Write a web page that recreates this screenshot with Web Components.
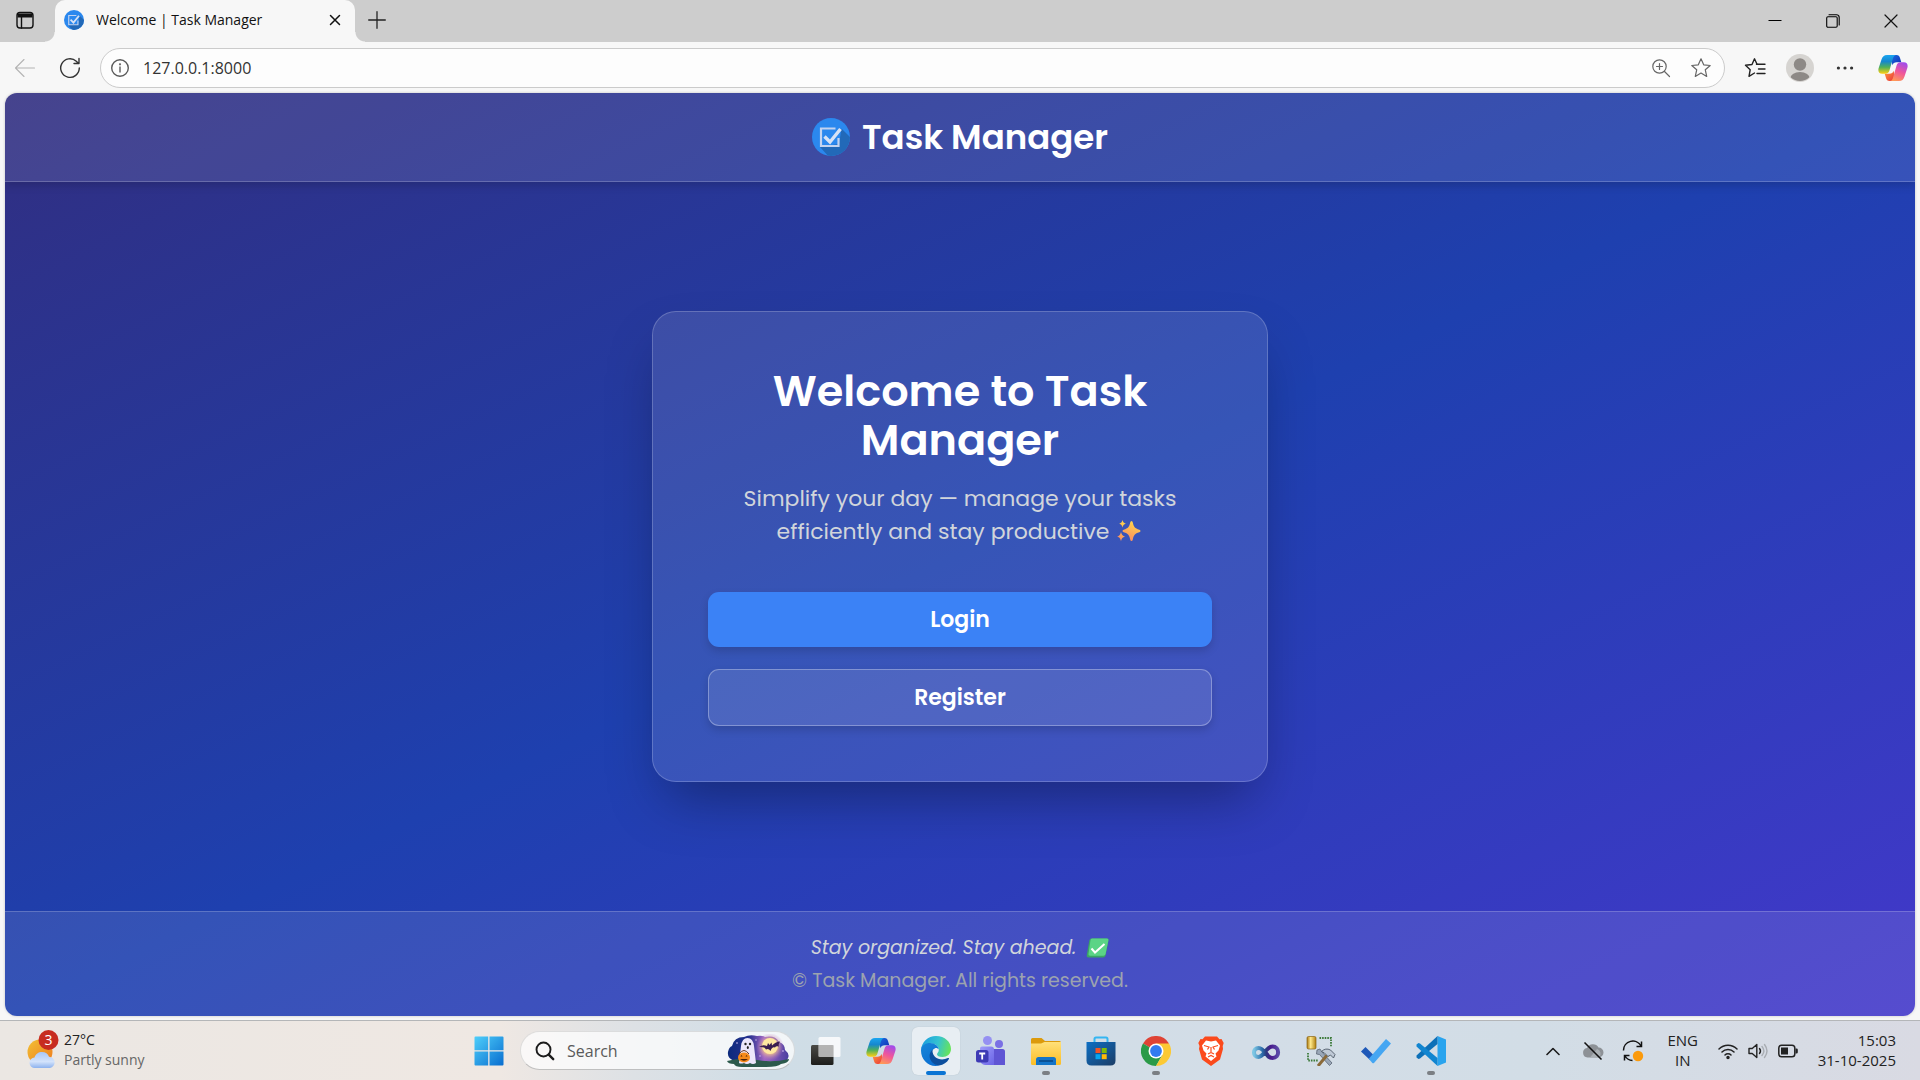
<!DOCTYPE html>
<html lang="en">
<head>
<meta charset="utf-8">
<title>Welcome | Task Manager</title>
<style>
  body { margin: 0; font-family: "Open Sans", "Noto Sans", sans-serif; color: #1b1b1b; }
</style>
</head>
<body>
<desktop-screen>
  <browser-window slot="window" address="127.0.0.1:8000" tab-title="Welcome | Task Manager">
    <task-page>
      <welcome-card>
        <span slot="title">Welcome to Task Manager</span>
        <span slot="text">Simplify your day — manage your tasks efficiently and stay productive</span>
        <action-button slot="actions" variant="primary">Login</action-button>
        <action-button slot="actions" variant="ghost">Register</action-button>
      </welcome-card>
    </task-page>
  </browser-window>
  <task-bar slot="taskbar"></task-bar>
</desktop-screen>

<script>
const RESET = `
  :host, *, *::before, *::after { box-sizing: border-box; }
  button { font: inherit; color: inherit; background: none; border: 0; padding: 0; margin: 0; cursor: pointer; display: flex; align-items: center; justify-content: center; }
  input { font: inherit; color: inherit; background: none; border: 0; padding: 0; margin: 0; outline: 0; min-width: 0; }
  svg { display: block; flex: none; }
`;

function define(name, render) {
  customElements.define(name, class extends HTMLElement {
    connectedCallback() {
      if (this.shadowRoot) return;
      const root = this.attachShadow({ mode: 'open' });
      const t = document.createElement('template');
      t.innerHTML = render(this).replace('<style>', '<style>' + RESET);
      root.append(t.content.cloneNode(true));
    }
  });
}

const line = (size, body, w = 1.4, color = '#333') =>
  `<svg width="${size}" height="${size}" viewBox="0 0 ${size} ${size}" fill="none" stroke="${color}" stroke-width="${w}" stroke-linecap="round" stroke-linejoin="round">${body}</svg>`;

const COPILOT = `
  <svg width="30" height="30" viewBox="0 0 30 30">
    <defs>
      <linearGradient id="ca" x1="0" y1="0" x2="0" y2="1"><stop offset="0" stop-color="#1aa5f0"/><stop offset=".35" stop-color="#1687cf"/><stop offset=".65" stop-color="#4fb05a"/><stop offset="1" stop-color="#ffcf12"/></linearGradient>
      <linearGradient id="cb" x1=".7" y1="0" x2=".3" y2="1"><stop offset="0" stop-color="#a24bea"/><stop offset=".5" stop-color="#f0569a"/><stop offset="1" stop-color="#ff9a56"/></linearGradient>
      <linearGradient id="cc" x1="0" y1="0" x2="1" y2="1"><stop offset="0" stop-color="#1b6be0"/><stop offset="1" stop-color="#0f2fb4"/></linearGradient>
      <linearGradient id="cd" x1="0" y1="0" x2="1" y2="1"><stop offset="0" stop-color="#ff9a3c"/><stop offset="1" stop-color="#e8323c"/></linearGradient>
    </defs>
    <path d="M13 2h5.500c2 0 3 1.300 3.500 3l1.300 4.300h-4.800c-2 0-3.500 1-4.200 3z" fill="url(#cc)"/>
    <path d="M17 28h-5.500c-2 0-3-1.300-3.500-3l-1.300-4.300h4.800c2 0 3.500-1 4.200-3z" fill="url(#cd)"/>
    <path d="M9 2h9c-1.700.3-2.500 1.700-3 3.300l-3.500 12c-.6 2.200-1.800 3.400-4 3.400H4.200c-3.300 0-4.400-2.600-3.600-5.500L3.500 6.500C4.500 3.500 6 2 9 2z" fill="url(#ca)"/>
    <path d="M21 28h-9c1.700-.3 2.500-1.700 3-3.300l3.500-12c.6-2.200 1.800-3.400 4-3.400h3.300c3.300 0 4.400 2.600 3.600 5.500l-2.900 8.700C25.500 26.500 24 28 21 28z" fill="url(#cb)"/>
  </svg>`;

define('desktop-screen', () => `
  <style>
    :host { display: flex; flex-direction: column; height: 100vh; min-height: 720px; }
    .window { flex: 1; display: flex; min-height: 0; }
  </style>
  <div class="window"><slot name="window"></slot></div>
  <slot name="taskbar"></slot>`);

/* App badge: blue disc with a ticked box and a long shadow */
define('task-logo', () => `
  <style>
    :host { display: block; width: 20px; height: 20px; flex: none; }
    svg { width: 100%; height: 100%; }
  </style>
  <svg viewBox="0 0 38 38" role="img" aria-label="Task Manager logo">
    <defs><clipPath id="disc"><circle cx="19" cy="19" r="19"/></clipPath></defs>
    <g clip-path="url(#disc)">
      <path d="M0 0h38v38H0z" fill="#2b88ee"/>
      <path d="M29.500 10.500 40 21v19H18L8 29l19-3z" fill="#2269b8"/>
    </g>
    <path d="M23.500 10.500H9v17.500h17.500v-8" fill="none" stroke="#c3d3f0" stroke-width="2.200"/>
    <path d="M12.500 18.500l5.500 5.500 10.500-13" fill="none" stroke="#d7e2f5" stroke-width="3.400"/>
  </svg>`);

define('browser-window', el => `
  <style>
    :host { flex: 1; display: flex; flex-direction: column; min-width: 0; background: #f7f7f7; }
    .strip { height: 42px; background: #cdcdcd; display: flex; align-items: stretch; font-size: 14px; }
    .strip > .cell { width: 50px; }
    .strip > .new { width: 44px; }
    .tab { position: relative; flex: 0 1 300px; margin-left: 5px; padding: 0 10px 0 9px; display: flex; align-items: center; gap: 12px; background: #f7f7f7; border-radius: 10px 10px 0 0; color: #111; }
    .tab::before, .tab::after { content: ""; position: absolute; bottom: 0; width: 10px; height: 10px; }
    .tab::before { left: -10px; background: radial-gradient(circle at 0 0, transparent 9px, #f7f7f7 10px); }
    .tab::after { right: -10px; background: radial-gradient(circle at 100% 0, transparent 9px, #f7f7f7 10px); }
    .tab span { flex: 1; white-space: nowrap; overflow: hidden; padding-bottom: 3px; }
    .tab task-logo, .tab button, .strip > .cell svg { margin-bottom: 2px; }
    .tab button { width: 20px; height: 20px; }
    .win { margin-left: auto; display: flex; }
    .win button { width: 58px; }
    .bar { height: 51px; display: flex; align-items: center; padding: 0 4px 0 5px; }
    .nav { display: flex; gap: 5px; margin-right: 10px; }
    .nav button { width: 40px; height: 40px; }
    .address { flex: 1; height: 40px; display: flex; align-items: center; border: 1px solid #cbcbcb; border-radius: 20px; background: #fdfdfd; padding: 0 3px 0 9px; margin-right: 7px; }
    .address input { flex: 1; font-size: 16px; padding-left: 13px; color: #333; }
    .address button { width: 40px; height: 36px; }
    .tools { display: flex; }
    .tools button { width: 45px; height: 40px; }
    .tools button:last-child { width: 49px; padding-left: 3px; }
    .view { flex: 1; display: flex; margin: 0 5px 4px; border-radius: 12px; overflow: hidden; min-height: 0; box-shadow: 0 0 3px #0003; }
  </style>
  <div class="strip">
    <button class="cell" aria-label="Tab actions">${line(18, '<rect x="1" y="1.500" width="16" height="15.500" rx="3"/><path d="M1.500 4.500h15" stroke-width="4" stroke-linecap="butt"/><path d="M5.500 6v11"/>', 1.4, '#111')}</button>
    <div class="tab"><task-logo></task-logo><span>${el.getAttribute('tab-title')}</span>
      <button aria-label="Close tab">${line(12, '<path d="M1.500 1.500l9 9M10.500 1.500l-9 9"/>', 1.5, '#111')}</button></div>
    <button class="cell new" aria-label="New tab">${line(18, '<path d="M9 .7v16.600M.7 9h16.600"/>', 1.3, '#222')}</button>
    <div class="win">
      <button aria-label="Minimize">${line(14, '<path d="M.5 6.500h13" stroke-linecap="butt"/>', 1, '#000')}</button>
      <button aria-label="Restore">${line(14, '<rect x=".7" y="2.700" width="10.500" height="10.500" rx="1.200"/><path d="M3 .7h7.500a2.700 2.700 0 0 1 2.700 2.700V11"/>', 1.1, '#000')}</button>
      <button aria-label="Close">${line(14, '<path d="M1 1l12 12M13 1L1 13"/>', 1.2, '#111')}</button>
    </div>
  </div>
  <div class="bar">
    <div class="nav">
      <button aria-label="Back">${line(22, '<path d="M20.500 11H1.500M10 2.500L1.500 11l8.500 8.500"/>', 1.1, '#b4b4b4')}</button>
      <button aria-label="Reload">${line(22, '<path d="M20.300 11a9.300 9.300 0 1 1-3-6.800l2 2M20 1.500v5h-5"/>', 1.4, '#333')}</button>
    </div>
    <div class="address">
      ${line(20, '<circle cx="10" cy="10" r="8.300"/><path d="M10 9v5"/><circle cx="10" cy="6.300" r=".4"/>', 1.4, '#5a5a5a')}
      <input type="text" aria-label="Address" value="${el.getAttribute('address')}">
      <button aria-label="Zoom">${line(20, '<circle cx="8.500" cy="8.500" r="6.700"/><path d="M13.500 13.500l5 5M8.500 5.500v6M5.500 8.500h6"/>', 1.2, '#666')}</button>
      <button aria-label="Add to favorites">${line(22, '<path d="M11 1.800l2.700 6 6.500.7-4.900 4.300 1.400 6.600L11 16l-5.700 3.400 1.400-6.600L1.800 8.500l6.500-.7z"/>', 1.2, '#666')}</button>
    </div>
    <div class="tools">
      <button aria-label="Favorites">${line(22, '<path d="M12.500 7.200H21M14.500 12H21M13 16.500h8"/><path d="M13 7.200L10.500 1.800 8 7.500l-6.500.8L6.200 12.700 5 19.300 10.500 16"/>', 1.4, '#222')}</button>
      <button aria-label="Profile"><svg width="28" height="28" viewBox="0 0 28 28"><defs><clipPath id="p"><circle cx="14" cy="14" r="13"/></clipPath></defs><circle cx="14" cy="14" r="14" fill="#d6d4d1"/><g fill="#8d8986" clip-path="url(#p)"><circle cx="14" cy="10.500" r="6.200"/><ellipse cx="14" cy="25" rx="10" ry="7"/></g></svg></button>
      <button aria-label="Settings and more"><svg width="18" height="6" viewBox="0 0 18 6" fill="#333"><circle cx="2.400" cy="3" r="1.600"/><circle cx="9" cy="3" r="1.600"/><circle cx="15.600" cy="3" r="1.600"/></svg></button>
      <button aria-label="Copilot">${COPILOT}</button>
    </div>
  </div>
  <div class="view"><slot></slot></div>`);

define('task-page', () => `
  <style>
    :host { flex: 1; display: flex; flex-direction: column; color: #fff; font-family: Poppins, Inter, sans-serif; background: linear-gradient(to bottom right, #312e81, #1e40af, #4338ca); }
    header { display: flex; align-items: center; justify-content: center; gap: 12px; padding: 18px; background: #ffffff1a; border-bottom: 1px solid #ffffff33; box-shadow: 0 4px 8px #00000026; font-size: 34px; font-weight: 600; line-height: 52px; }
    header task-logo { width: 38px; height: 38px; }
    header h1 { margin: 0; font: inherit; }
    main { flex: 1; display: flex; align-items: center; justify-content: center; padding: 20px; }
    footer { padding: 19px 16px; background: #ffffff1a; border-top: 1px solid #ffffff33; text-align: center; font-size: 19px; line-height: 33px; color: #9ca3af; }
    footer p { margin: 0; display: flex; justify-content: center; align-items: center; gap: 10px; }
    .motto { font-style: italic; color: #d1d5db; }
  </style>
  <header><task-logo></task-logo><h1>Task Manager</h1></header>
  <main><slot></slot></main>
  <footer>
    <p class="motto">Stay organized. Stay ahead.
      <svg width="23" height="20" viewBox="0 0 23 20" role="img" aria-label="check mark"><path d="M5.500.5H21q2 0 1.500 2l-3 15q-.4 2-2.500 2H2.500q-2.200 0-1.800-2l2.600-15Q3.600.5 5.500.5z" fill="#3aa565"/><path d="M6 .5h15q1.800 0 1.400 1.800L19.600 16q-.4 1.800-2.200 1.800H4q-1.900 0-1.500-1.800L4.500 2Q4.800.5 6 .5z" fill="#5bd486"/><path d="M5.500 10.500l3.500 4 9.500-8.500" fill="none" stroke="#fff" stroke-width="2"/></svg>
    </p>
    <p>© Task Manager. All rights reserved.</p>
  </footer>`);

define('welcome-card', () => `
  <style>
    :host { display: block; width: 100%; max-width: 616px; padding: 55px; border: 1px solid #ffffff33; border-radius: 24px; background: #ffffff1c; box-shadow: 0 28px 56px -14px #00000059; text-align: center; }
    h2 { margin: 0 0 17px; font-size: 43px; font-weight: 600; line-height: 49px; }
    p { margin: 0 0 44px; font-size: 22px; line-height: 33px; color: #d1d5db; }
    p svg { display: inline-block; vertical-align: -3px; margin: 0 2px; }
    .actions { display: flex; flex-direction: column; gap: 22px; }
  </style>
  <h2><slot name="title"></slot></h2>
  <p><slot name="text"></slot>
    <svg width="24" height="22" viewBox="0 0 24 22" role="img" aria-label="sparkles"><defs><linearGradient id="s" x1=".7" y1="0" x2=".3" y2="1"><stop offset="0" stop-color="#ffd84a"/><stop offset="1" stop-color="#f98a62"/></linearGradient></defs><g fill="url(#s)"><path d="M14.500 1q1 0 1.300 1.500c.9 4.200 2 5.900 6.500 7.200q1.200.5 1.200 1.300t-1.200 1.300c-4.500 1.300-5.600 3-6.500 7.200Q15.500 21 14.500 21t-1.300-1.500c-.9-4.200-2-5.900-6.500-7.200Q5.500 11.800 5.500 11t1.200-1.300c4.500-1.300 5.600-3 6.500-7.200Q13.500 1 14.500 1z"/><path d="M5.500 0c.7 2.400 1.100 2.900 3.300 3.700-2.200.8-2.600 1.300-3.300 3.700-.7-2.400-1.100-2.900-3.300-3.700C4.400 2.900 4.800 2.400 5.500 0zM4 12c.9 3 1.500 3.700 4.200 4.600C5.500 17.500 4.900 18.200 4 21.200c-.9-3-1.300-3.700-4-4.600C2.700 15.700 3.100 15 4 12z"/></g></svg></p>
  <div class="actions"><slot name="actions"></slot></div>`);

define('action-button', () => `
  <style>
    :host { display: block; }
    button { width: 100%; border-radius: 11px; padding: 11px; font-size: 22px; font-weight: 600; line-height: 33px; color: #fff; background: #3b82f6; box-shadow: 0 4px 8px #00000026; }
    :host([variant="ghost"]) button { background: #ffffff1a; border: 1px solid #ffffff4d; }
  </style>
  <button type="button"><slot></slot></button>`);

/* Windows-style taskbar */
const svg = body => `<svg width="30" height="30" viewBox="0 0 30 30">${body}</svg>`;
const APPS = [
  ['Task View', `<defs><linearGradient id="tv" x1="0" y1="0" x2="0" y2="1"><stop stop-color="#4a4a46"/><stop offset="1" stop-color="#1d1d1b"/></linearGradient></defs><rect y="9" width="22.500" height="20" rx="1.500" fill="url(#tv)"/><rect x="7.500" y="1" width="22" height="20" rx="1.500" fill="#fff" fill-opacity=".8"/><path d="M7.500 9h15v12h-15z" fill="#8e8e8e" fill-opacity=".5"/>`],
  ['Copilot', COPILOT],
  ['Edge', `<defs><linearGradient id="e1" x1="0" y1=".3" x2="1" y2=".5"><stop stop-color="#1a9de0"/><stop offset=".55" stop-color="#35c3d0"/><stop offset="1" stop-color="#67e45a"/></linearGradient><linearGradient id="e2" x1="0" y1="0" x2=".5" y2="1"><stop stop-color="#1787d8"/><stop offset="1" stop-color="#0b6fd2"/></linearGradient></defs>
    <path d="M0 14C.6 6 7 0 15 0c9 0 15 6 15 13 0 5-4 8-8.500 8-3.500 0-5.500-1.500-5.500-2.800 0-1 1.800-1.800 1.800-4.400C17.800 10.500 14.500 7.500 10 7.500 5 7.500 1 10.500 0 14z" fill="url(#e1)"/>
    <path d="M0 14.500c0-5 4.500-7.500 9-7.500 4.800 0 8.700 3 8.700 6.600-1-1.500-2.600-1.900-4-1.200C8 15 9 27 18.500 29.500 8 32 0 24 0 14.500z" fill="url(#e2)"/>
    <path d="M11.500 13.800C5.500 19 9.500 28.500 18 29.600c4.500-.6 8-3 9.900-6.500.4-.8-.3-1.400-1-1C20 25.500 11 22.500 11.500 13.800z" fill="#0c4f9e"/>`, 'active'],
  ['Teams', `<defs><linearGradient id="t1" x1="0" y1="0" x2="1" y2="1"><stop stop-color="#9f9cfa"/><stop offset="1" stop-color="#6a64e6"/></linearGradient></defs><circle cx="11.500" cy="4.500" r="4.500" fill="#9590f2"/><circle cx="23" cy="8" r="4" fill="#7a70e4"/><path d="M17 13h9.500q2.500 0 2.500 2.500V29H17z" fill="#5f55d4"/><path d="M4 12.500q0-2 2-2h9q3 0 3 3V29h-9a6 6 0 0 1-5-5z" fill="url(#t1)"/><rect x="0" y="14" width="12.500" height="12.500" rx="2.500" fill="#3d3ab5"/><path d="M3.200 17.500h6M6.200 17.500v6" stroke="#fff" stroke-width="1.800"/>`],
  ['File Explorer', `<defs><linearGradient id="f1" x1="0" y1="0" x2="0" y2="1"><stop stop-color="#ffe07a"/><stop offset="1" stop-color="#fbbd24"/></linearGradient></defs><path d="M0 3.500Q0 2 1.500 2h9L14 5h14.500Q30 5 30 6.500V14H0z" fill="#dc9a0c"/><path d="M0 7.500h10l3.500-1.500H30v21.500q0 1.500-1.500 1.500h-27Q0 29 0 27.500z" fill="url(#f1)"/><path d="M5 29v-5.500Q5 21 7.500 21h15q2.500 0 2.500 2.500V29z" fill="#1374c8"/><path d="M8 25h14" stroke="#0a4a8a" stroke-width="1.600"/>`, 'running'],
  ['Microsoft Store', `<defs><linearGradient id="m1" x1="0" y1="0" x2="1" y2="1"><stop stop-color="#0d6fc4"/><stop offset="1" stop-color="#1c3d66"/></linearGradient></defs><path d="M8.500 7V3q0-1.500 1.500-1.500h10q1.500 0 1.500 1.500v4" fill="none" stroke="#34b6f2" stroke-width="2"/><path d="M.5 6h29v18.500q0 5-5 5h-19q-5 0-5-5z" fill="url(#m1)"/><path d="M9.500 12h5v5h-5z" fill="#f35325"/><path d="M15.700 12h5v5h-5z" fill="#81bc06"/><path d="M9.500 18.200h5v5h-5z" fill="#05a6f0"/><path d="M15.700 18.200h5v5h-5z" fill="#ffba08"/>`],
  ['Chrome', `<path d="M15 15L2 7.500a15 15 0 0 1 26 0z" fill="#df4335"/><path d="M2 7.500a15 15 0 0 0 13 22.500l6.500-11.250L15 15z" fill="#2a9a48"/><path d="M28 7.500A15 15 0 0 1 15 30l6.500-11.250L15 7.500z" fill="#fcc934"/><circle cx="15" cy="15" r="7.500" fill="#fff"/><circle cx="15" cy="15" r="5.900" fill="#327bf0"/>`, 'running'],
  ['Brave', `<path d="M9 .5h12l2.500 2.800 2-.3 2.200 4-1 3L27 13l-3 10.500-9 6.500-9-6.500L3 13l.5-3-1.200-3 2.200-4 2 .3z" fill="#fb4a1c"/><path d="M15 5.500l5-1 4 5-1.500 5-3 3 1 3-5.500 4.500-5.500-4.500 1-3-3-3-1.500-5 4-5z" fill="#fff"/><path d="M8 9.500l5 1.500-1.500 2.500M22 9.500L17 11l1.500 2.500M15 11v6M12 18l3-1.500 3 1.500M12 21l3-1.500 3 1.500" stroke="#fb4a1c" stroke-width="1.200" fill="none"/>`],
  ['Visual Studio', `<defs><linearGradient id="v1"><stop stop-color="#7cc6e4"/><stop offset=".35" stop-color="#2b6aa8"/><stop offset=".5" stop-color="#2c3c80"/><stop offset=".7" stop-color="#4a1a8c"/><stop offset="1" stop-color="#5a4aa8"/></linearGradient></defs><path d="M15 18C12 13.500 10 12 7.500 12c-6 0-6 9 0 9 5.500 0 7.500-10.500 14-10.500 7.500 0 7.500 11.500 0 11.500-3 0-5-2-6.500-5" fill="none" stroke="url(#v1)" stroke-width="4"/>`],
  ['Tools', `<defs><linearGradient id="k1"><stop stop-color="#a87612"/><stop offset=".4" stop-color="#ffe98a"/><stop offset="1" stop-color="#b07f10"/></linearGradient></defs><rect x="1" y=".5" width="9" height="12.500" rx="1.500" fill="url(#k1)" stroke="#8a6412" stroke-width=".7"/><path d="M13.500 2H25v9M2 17v7.500h10" fill="none" stroke="#3c7a3a" stroke-width="1.800" stroke-dasharray="1.600 1"/><path d="M11 14l3-1 2 3 10 11-2.500 2.500-10-11-3-.5z" fill="#9aa7b8" stroke="#5b6575" stroke-width=".8"/><path d="M22 18L12 30" stroke="#8a6a3a" stroke-width="3"/><path d="M15.500 15.500q4-4 9-1.500l4.500 4.500-1.500 3.500-3-3-2.500 1.500-3.500-3.500z" fill="#bfc9d6" stroke="#4e5968" stroke-width=".9"/>`],
  ['To Do', `<path d="M0 15.500l4.500-4.500 8 8L9 24z" fill="#1e58b8"/><path d="M7.800 22.800L25 3l5 4.500L13 27q-.8.700-1.700 0z" fill="#45a6f2"/>`],
  ['VS Code', `<path d="M21.500 0L30 3.500v23L21.500 30z" fill="#2aa4ee"/><path d="M.5 19.500L21.500 0v8L4 22.500 2.500 23 .5 21.500z" fill="#0d70b8"/><path d="M.5 10.500L21.500 30v-8L4 7.500 2.500 7 .5 8.500z" fill="#1185d0"/>`, 'running'],
];

define('task-bar', () => `
  <style>
    :host { display: grid; grid-template-columns: 1fr auto 1fr; align-items: center; height: 60px; border-top: 1px solid #b4b6b8; line-height: 20px; font-size: 15px; color: #222;
      background: linear-gradient(90deg, #ebe7e3, #efe8e3 26%, #dde1e5 33%, #cfdde6 40%, #d3dde7 65%, #d2dde6 80%, #d9dae3); }
    .weather { justify-self: start; gap: 5px; margin-left: 27px; text-align: left; font-size: 14px; }
    .weather .sub { color: #666; }
    .weather span { display: block; }
    .weather, .lang, .clock { padding-bottom: 2px; }
    .center { display: flex; align-items: center; gap: 7px; }
    .center > button { position: relative; width: 48px; height: 48px; border-radius: 6px; }
    .center > button.active { background: #ffffff80; box-shadow: 0 0 1px #0003; }
    .center > button.active::after, .center > button.running::after { content: ""; position: absolute; bottom: 0; left: 20px; width: 8px; height: 4px; border-radius: 2px; background: #7b7f84; }
    .center > button.active::after { left: 14px; width: 20px; background: #0a74d4; }
    .search { width: 275px; height: 39px; display: flex; align-items: center; border-radius: 20px; background: #ffffffb8; border: 1px solid #0000001c; border-bottom-color: #0000003a; padding: 0 5px 0 14px; gap: 12px; }
    .search input { flex: 1; font-size: 16px; }
    .search input::placeholder { color: #5a5a5a; opacity: 1; }
    .tray { justify-self: end; display: flex; align-items: center; gap: 2px; margin-right: 24px; }
    .icons { display: flex; }
    .icons button { width: 40px; height: 40px; }
    .icons.status button { width: 30px; }
    .lang { width: 56px; text-align: center; }
    .clock { text-align: right; margin-left: 13px; }
    .lang span, .clock span { display: block; }
  </style>
  <button class="weather" aria-label="Weather">
    <svg width="32" height="40" viewBox="0 0 32 40"><defs><linearGradient id="su" x1="0" y1="0" x2="1" y2="1"><stop stop-color="#f2c035"/><stop offset="1" stop-color="#ee7a1c"/></linearGradient><linearGradient id="cl" x1="0" y1="0" x2="0" y2="1"><stop stop-color="#a9c8f7"/><stop offset=".6" stop-color="#d3e3fb"/><stop offset="1" stop-color="#8db2ee"/></linearGradient></defs>
      <circle cx="13" cy="22" r="12.500" fill="url(#su)"/><path d="M8 38a5 5 0 0 1-.5-10.500C8.500 24 11.500 22 15 22s6 2 7 4.700A5.700 5.700 0 0 1 23 38z" fill="url(#cl)"/><circle cx="21.500" cy="10" r="10" fill="#c72c20"/><text x="21.500" y="15" font-size="14" fill="#fff" text-anchor="middle">3</text></svg>
    <div><span>27°C</span><span class="sub">Partly sunny</span></div>
  </button>
  <div class="center">
    <button aria-label="Start">${svg('<defs><linearGradient id="w" gradientUnits="userSpaceOnUse" x1="0" y1="0" x2="29" y2="29"><stop stop-color="#4fd0fb"/><stop offset="1" stop-color="#0a6fd0"/></linearGradient></defs><path d="M.5 1.500q0-1 1-1h12.700v13.700H.5zM15.500.5h13q1 0 1 1v12.700h-14zM.5 15.500h13.700v14H1.500q-1 0-1-1zM15.500 15.500h14v13q0 1-1 1h-13z" fill="url(#w)"/>')}</button>
    <div class="search">
      ${line(20, '<circle cx="8.500" cy="8.500" r="7"/><path d="M13.700 13.700l4.500 4.500" stroke-width="2.400"/>', 1.9, '#1c1c1c')}
      <input type="search" placeholder="Search" aria-label="Search">
      <svg width="62" height="34" viewBox="0 0 62 34" aria-hidden="true"><defs><linearGradient id="h"><stop stop-color="#0c2a7c"/><stop offset=".35" stop-color="#26318e"/><stop offset=".6" stop-color="#a066c4"/><stop offset="1" stop-color="#4a3fa0"/></linearGradient><radialGradient id="g"><stop stop-color="#fff2a8"/><stop offset=".5" stop-color="#f7c78a"/><stop offset="1" stop-color="#b26fd0" stop-opacity="0"/></radialGradient></defs>
        <path d="M8 27q-8-2-7-9 1-5 4-6 2-9 12-9 6-3 13-1 5-1 8 1 10-2 14 5 6 2 6 8 5 4 3 8-1 5-8 4z" fill="url(#h)"/><circle cx="43" cy="13" r="14" fill="url(#g)" fill-opacity=".8"/><circle cx="43" cy="12" r="8" fill="#ffe7a0"/>
        <path d="M0 27q15-4 30-1t32-1q0 4-8 5-3 3-15 3H15q-7 0-8-3-6 0-7-3z" fill="#2c5a4c"/>
        <path d="M14 12q1-8 6.500-8T27 12l2 17q-3 2-6 0-3 2-6 0-3 1-5 0z" fill="#ece6fb"/><circle cx="18.500" cy="10" r="1.200" fill="#222"/><circle cx="23" cy="10" r="1.200" fill="#222"/><ellipse cx="20.800" cy="13.500" rx="1" ry="1.500" fill="#222"/>
        <path d="M12 20q5-7 10 0" fill="none" stroke="#6a3a1c"/><ellipse cx="17" cy="23.500" rx="6" ry="5" fill="#f58a1a"/><path d="M13.500 22.500h2l-1-1.500zM18.500 22.500h2l-1-1.500zM13 25q4 3.500 8 0z" fill="#4a2008"/>
        <path d="M32 13q4-3 8-1l1-3 1.500 2 2-2.500.5 3q4-4 8-4-2 3-1 5-3-1-4 1-3-1-4.500 3.500-2-3-4.500-1.500-1-3-7-2.500z" fill="#3a1d50"/>
        <g fill="#d9c6f5"><circle cx="10" cy="9" r=".8"/><circle cx="29" cy="6" r=".7"/><circle cx="33" cy="22" r=".7"/><circle cx="56" cy="17" r=".8"/></g></svg>
    </div>
    ${APPS.map(([n, b, c]) => `<button aria-label="${n}" class="${c || ''}">${b === COPILOT ? b : svg(b)}</button>`).join('')}
  </div>
  <div class="tray">
    <div class="icons">
      <button aria-label="Show hidden icons">${line(14, '<path d="M1 10.500l6-6 6 6"/>', 1.6, '#1c1c1c')}</button>
      <button aria-label="OneDrive"><svg width="22" height="20" viewBox="0 0 22 20"><path d="M5.500 16.500a4.800 4.800 0 0 1-.5-9.500A6.500 6.500 0 0 1 16.500 6.500a5 5 0 0 1 0 10z" fill="#8d9196"/><path d="M8 16.500L15 8a5 5 0 0 1 2 8.500z" fill="#aab0b4"/><path d="M2.500 1.500l17 17" stroke="#111" stroke-width="1.600"/></svg></button>
      <button aria-label="Update"><svg width="22" height="22" viewBox="0 0 22 22"><path d="M1.500 10.500A9.300 9.300 0 0 1 19 6M19.500 1.500v5h-5M7.500 15.500h-5v5M3 16a9 9 0 0 0 7.500 4.500" fill="none" stroke="#111" stroke-width="1.500"/><circle cx="16" cy="16" r="5.200" fill="#fb9a0c"/></svg></button>
    </div>
    <button class="lang" aria-label="Keyboard layout"><div><span>ENG</span><span>IN</span></div></button>
    <div class="icons status">
      <button aria-label="Network">${line(20, '<path d="M1 8a12.700 12.700 0 0 1 18 0M4 11a8.500 8.500 0 0 1 12 0M7 14a4.200 4.200 0 0 1 6 0"/><circle cx="10" cy="16.500" r="1" fill="#222"/>', 1.5, '#222')}</button>
      <button aria-label="Volume">${line(20, '<path d="M1 7.500h3.200L8.800 3.500v13L4.200 12.500H1z"/><path d="M11.500 7.500q2 2.500 0 5"/><path d="M14 5.500q3.800 4.500 0 9M16.500 3.500q5 6.500 0 13" stroke="#a9adb3"/>', 1.4, '#222')}</button>
      <button aria-label="Battery"><svg width="20" height="14" viewBox="0 0 20 14"><rect x=".8" y="1.300" width="16" height="11.400" rx="2.800" fill="none" stroke="#222" stroke-width="1.500"/><path d="M3 3.500h7v7H3zM17.500 4.500h1q1.300 0 1.300 1.300v2.400q0 1.300-1.300 1.300h-1z" fill="#222"/></svg></button>
    </div>
    <button class="clock" aria-label="Clock"><div><span>15:03</span><span>31-10-2025</span></div></button>
  </div>`);
</script>
</body>
</html>
